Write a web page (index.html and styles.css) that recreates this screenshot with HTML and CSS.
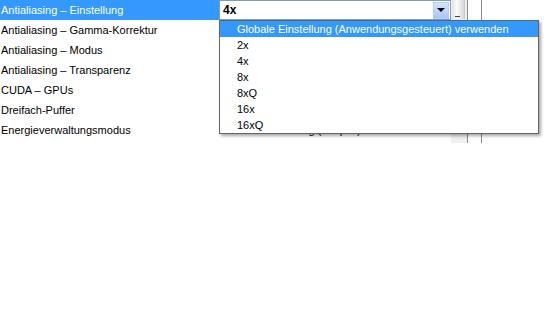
FILE: index.html
```html
<!DOCTYPE html>
<html lang="de">

<head>
    <meta charset="UTF-8" />
    <title>3D-Einstellungen</title>
    <link rel="stylesheet" href="styles.css">
</head>

<body>
    <div class="panel">
        <div class="settings">
            <div class="row selected">
                <div class="label">Antialiasing &ndash; Einstellung</div>
                <div class="value">
                    <div class="combo">
                        <span class="combo-text">4x</span>
                        <span class="combo-btn"><span class="arrow"></span></span>
                    </div>
                </div>
            </div>
            <div class="row">
                <div class="label">Antialiasing &ndash; Gamma-Korrektur</div>
                <div class="value"></div>
            </div>
            <div class="row">
                <div class="label">Antialiasing &ndash; Modus</div>
                <div class="value"></div>
            </div>
            <div class="row">
                <div class="label">Antialiasing &ndash; Transparenz</div>
                <div class="value"></div>
            </div>
            <div class="row">
                <div class="label">CUDA &ndash; GPUs</div>
                <div class="value"></div>
            </div>
            <div class="row">
                <div class="label">Dreifach-Puffer</div>
                <div class="value"></div>
            </div>
            <div class="row">
                <div class="label">Energieverwaltungsmodus</div>
                <div class="value">Maximale Leistung (adaptiv)</div>
            </div>
        </div>

        <div class="scroll">
            <div class="thumb"><span class="grip"></span></div>
        </div>
        <div class="edge"></div>

        <!-- open combo list -->
        <ul class="dropdown">
            <li class="active">Globale Einstellung (Anwendungsgesteuert) verwenden</li>
            <li>2x</li>
            <li>4x</li>
            <li>8x</li>
            <li>8xQ</li>
            <li>16x</li>
            <li>16xQ</li>
        </ul>
    </div>
</body>

</html>
```

FILE: styles.css
```css
:root {
    --select: #3399ff;
    --border: #7f9db9;
    --line: #8a8a8a;
    --track: #f0f0f0;
}

* {
    box-sizing: border-box;
}

body {
    margin: 0;
    background-color: #ffffff;
    color: #000000;
    font-family: 'Liberation Sans', Arial, sans-serif;
    font-size: 11px;
}

.panel {
    position: relative;
    display: flex;
    height: 143px;
}

.settings {
    width: 451px;
}

.row {
    display: flex;
    height: 20px;
    line-height: 20px;
}

.label {
    width: 219px;
    padding-left: 1px;
    white-space: nowrap;
}

.row.selected .label {
    background-color: var(--select);
    color: #ffffff;
}

.value {
    flex: 1;
    padding-left: 4px;
    white-space: nowrap;
}

.row.selected .value {
    padding-left: 0;
}

.combo {
    display: flex;
    align-items: center;
    height: 20px;
    border: 1px solid var(--border);
    background-color: #ffffff;
}

.combo-text {
    flex: 1;
    padding-left: 3px;
    font-weight: bold;
    font-size: 12px;
}

.combo-btn {
    display: flex;
    align-items: center;
    justify-content: center;
    width: 16px;
    height: 17px;
    margin-right: 1px;
    background: linear-gradient(#d6e4fb, #a9c5f3);
    border: 1px solid #b9cdf0;
}

.arrow {
    width: 0;
    height: 0;
    border-left: 4px solid transparent;
    border-right: 4px solid transparent;
    border-top: 4px solid #000000;
}

.scroll {
    width: 16px;
    background-color: var(--track);
}

.thumb {
    position: relative;
    width: 13px;
    height: 19px;
    margin-left: 1px;
    background: linear-gradient(90deg, #e2e2e2, #fbfbfb 40%, #d8d8d8);
    border-right: 1px solid #c8c8c8;
}

.grip {
    position: absolute;
    left: 3px;
    bottom: 2px;
    width: 5px;
    height: 1px;
    background-color: #404040;
}

.edge {
    width: 15px;
    border-left: 1px solid var(--line);
    border-right: 1px solid var(--line);
}

.dropdown {
    position: absolute;
    left: 219px;
    top: 20px;
    width: 320px;
    margin: 0;
    padding: 0;
    list-style: none;
    background-color: #ffffff;
    border: 1px solid #646464;
    box-shadow: 2px 2px 3px rgba(0, 0, 0, 0.35);
}

.dropdown li {
    height: 16px;
    line-height: 16px;
    padding-left: 17px;
    white-space: nowrap;
}

.dropdown li.active {
    background-color: var(--select);
    color: #ffffff;
}
```
